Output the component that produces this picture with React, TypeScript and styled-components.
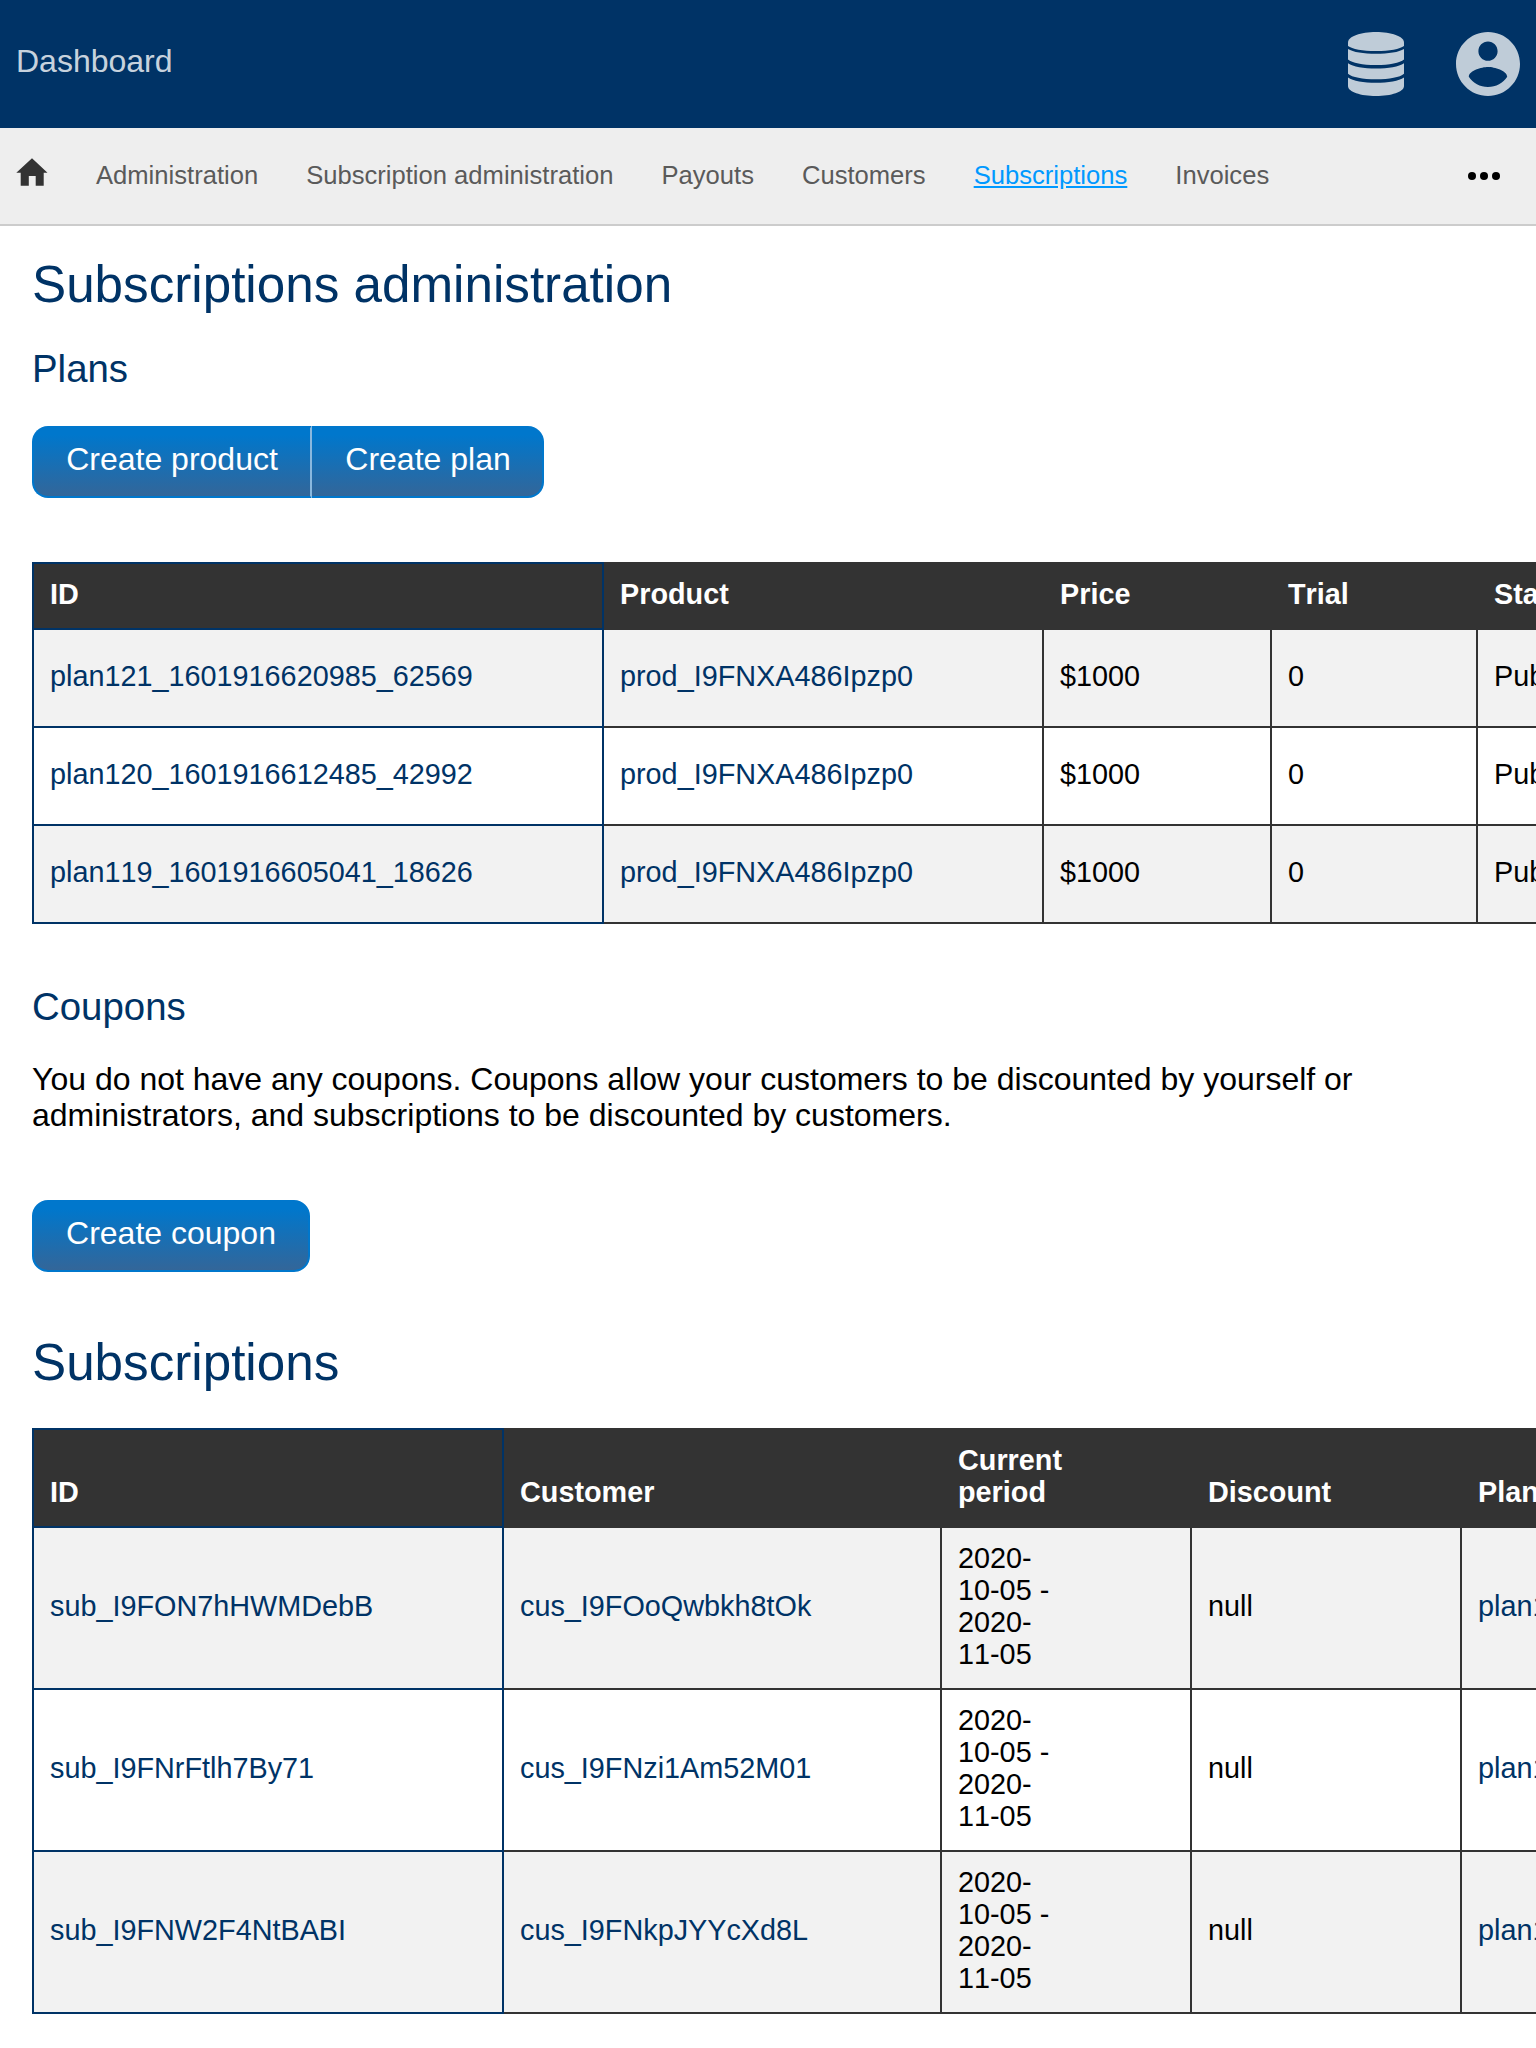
import React from "react";
import styled, { createGlobalStyle } from "styled-components";

const NAVY = "#003366";

const GlobalStyle = createGlobalStyle`
  html, body { margin: 0; padding: 0; background: #fff; }
  body {
    font: 32px/36px "Liberation Sans", Arial, sans-serif;
    color: #000;
    overflow: hidden;
  }
  *, *::before, *::after { box-sizing: border-box; }
`;

const Page = styled.div`
  height: 2048px;
  overflow: hidden;
`;

const Header = styled.header`
  display: flex;
  align-items: center;
  justify-content: space-between;
  height: 128px;
  padding: 0 16px;
  background: ${NAVY};
`;

const Brand = styled.a`
  padding-bottom: 7px;
  color: rgba(255, 255, 255, 0.8);
  text-decoration: none;
`;

const HeaderIcons = styled.div`
  display: flex;
  gap: 52px;
  color: #fff;
  opacity: 0.75;

  svg { display: block; height: 64px; fill: currentColor; }
`;

const NavBar = styled.nav`
  display: flex;
  align-items: center;
  height: 98px;
  padding: 0 36px 2px 16px;
  background: #eee;
  border-bottom: 2px solid #ccc;
  font-size: 25.6px;
  line-height: 30px;
`;

const HomeLink = styled.a`
  display: flex;
  width: 32px;
  margin: 0 48px 6px 0;
  color: #333;
`;

const NavLinks = styled.div`
  display: flex;
  flex: 1;
  gap: 48px;
`;

const NavLink = styled.a<{ $active?: boolean }>`
  color: ${(p) => (p.$active ? "#0099ff" : "#5a5a5a")};
  text-decoration: ${(p) => (p.$active ? "underline" : "none")};
`;

const More = styled.div`
  display: flex;
  gap: 4px;
  margin-top: 2px;
`;

const Dot = styled.span`
  width: 8px;
  height: 8px;
  border-radius: 50%;
  background: #000;
`;

const Content = styled.main`
  padding: 29px 32px 0;
`;

const Title = styled.h1`
  margin: 0;
  color: ${NAVY};
  font-size: 51.2px;
  font-weight: 400;
  line-height: 60px;
`;

const Subtitle = styled.h2`
  margin: 0;
  color: ${NAVY};
  font-size: 38.4px;
  font-weight: 400;
  line-height: 44px;
`;

const PlansHeading = styled(Subtitle)`
  margin: 32px 0 35px;
`;

const CouponsHeading = styled(Subtitle)`
  margin: 61px 0 32px;
`;

const Paragraph = styled.p`
  margin: 0 0 67px;
`;

const ButtonGroup = styled.div<{ $gap: number }>`
  display: flex;
  margin-bottom: ${(p) => p.$gap}px;
`;

const Button = styled.a<{ $width: number }>`
  width: ${(p) => p.$width}px;
  height: 72px;
  padding: 13px 0 0;
  border: 2px solid #0077cc;
  background: linear-gradient(#0077cc 10%, #336699) padding-box, #0077cc;
  color: #fff;
  line-height: 36px;
  text-align: center;

  &:first-child { border-radius: 16px 0 0 16px; }
  &:last-child { border-radius: 0 16px 16px 0; border-left-width: 0; padding-left: 2px; }
  &:only-child { border-radius: 16px; border-left-width: 2px; padding-left: 0; }
  &:first-child:not(:last-child) { border-right-color: #8ab8de; }
`;

const Table = styled.table<{ $width: number }>`
  width: ${(p) => p.$width}px;
  table-layout: fixed;
  border-collapse: collapse;
  font-size: 28.8px;
  line-height: 32px;
  font-kerning: none;
`;

const Row = styled.tr<{ $height: number }>`
  height: ${(p) => p.$height}px;
  &:nth-child(odd) { background: #f2f2f2; }
`;

const cell = `
  padding: 14px 16px 18px;
  border: 2px solid #333;
  text-align: left;
  &:first-child { border-color: ${NAVY}; }
`;

const HeadCell = styled.th`
  ${cell}
  background: #333;
  color: #fff;
  font-weight: 700;
  vertical-align: bottom;
`;

const Cell = styled.td`
  ${cell}
  vertical-align: middle;
`;

const CellLink = styled.a`
  color: ${NAVY};
  white-space: nowrap;
`;

const Period = styled.div`
  width: 100px;
`;

const SubscriptionsHeading = styled(Title)`
  margin: 0 0 35px;
`;

const DatabaseIcon = () => (
  <svg viewBox="0 0 56 64" width="56">
    <path d="M0 10.7C0 4.2 12.8 0 28 0s28 4.2 28 10.7V14c-4 3.1-14.500 5-28 5S4 17.100 0 14z" />
    <path d="M0 17c5 3.200 15.500 4.800 28 4.800S51 20.200 56 17v10.500c-4 3.500-14.500 5.500-28 5.500S4 31 0 27.500z" />
    <path d="M0 31.200c5 3.500 15.500 5.300 28 5.300s23-1.800 28-5.300v10.500c-4 3.600-14.500 5.500-28 5.500S4 45.300 0 41.700z" />
    <path d="M0 45.500c5 3.500 15.500 5.300 28 5.300s23-1.800 28-5.300v8.500c0 6-12.800 10-28 10S0 60 0 54z" />
  </svg>
);

const AccountIcon = () => (
  <svg viewBox="2 2 20 20" width="64">
    <path d="M12 2C6.48 2 2 6.48 2 12s4.480 10 10 10 10-4.480 10-10S17.520 2 12 2zm0 3c1.660 0 3 1.340 3 3s-1.340 3-3 3-3-1.340-3-3 1.340-3 3-3zm0 14.200c-2.500 0-4.710-1.280-6-3.220.03-1.990 4-3.080 6-3.080 1.990 0 5.970 1.090 6 3.080-1.290 1.940-3.500 3.220-6 3.220z" />
  </svg>
);

const HomeIcon = () => (
  <svg viewBox="0 0 32 28" width="32" height="28" fill="currentColor">
    <path d="M16 .3 31.500 14.800H27.700V27.700H19.700V18H12.800V27.700H4.700V14.800H.3z" />
  </svg>
);

const navItems = [
  "Administration",
  "Subscription administration",
  "Payouts",
  "Customers",
  "Subscriptions",
  "Invoices",
];

const plans = [
  "plan121_1601916620985_62569",
  "plan120_1601916612485_42992",
  "plan119_1601916605041_18626",
];

const subscriptions = [
  { id: "sub_I9FON7hHWMDebB", customer: "cus_I9FOoQwbkh8tOk" },
  { id: "sub_I9FNrFtlh7By71", customer: "cus_I9FNzi1Am52M01" },
  { id: "sub_I9FNW2F4NtBABI", customer: "cus_I9FNkpJYYcXd8L" },
];

const planColumns = [570, 440, 228, 206, 240];
const subscriptionColumns = [470, 438, 250, 270, 560];

const sum = (values: number[]) => values.reduce((a, b) => a + b, 0);

const Columns = ({ widths }: { widths: number[] }) => (
  <colgroup>
    {widths.map((w, i) => (
      <col key={i} width={w} />
    ))}
  </colgroup>
);

const Head = ({ labels, height }: { labels: React.ReactNode[]; height: number }) => (
  <thead>
    <Row $height={height}>
      {labels.map((label, i) => (
        <HeadCell key={i}>{label}</HeadCell>
      ))}
    </Row>
  </thead>
);

export default function App() {
  return (
    <Page>
      <GlobalStyle />
      <Header>
        <Brand>Dashboard</Brand>
        <HeaderIcons>
          <DatabaseIcon />
          <AccountIcon />
        </HeaderIcons>
      </Header>
      <NavBar>
        <HomeLink>
          <HomeIcon />
        </HomeLink>
        <NavLinks>
          {navItems.map((item) => (
            <NavLink key={item} $active={item === "Subscriptions"}>
              {item}
            </NavLink>
          ))}
        </NavLinks>
        <More>
          <Dot />
          <Dot />
          <Dot />
        </More>
      </NavBar>
      <Content>
        <Title>Subscriptions administration</Title>
        <PlansHeading>Plans</PlansHeading>
        <ButtonGroup $gap={64}>
          <Button $width={280}>Create product</Button>
          <Button $width={232}>Create plan</Button>
        </ButtonGroup>
        <Table $width={sum(planColumns)}>
          <Columns widths={planColumns} />
          <Head labels={["ID", "Product", "Price", "Trial", "Status"]} height={66} />
          <tbody>
            {plans.map((id) => (
              <Row key={id} $height={98}>
                <Cell><CellLink>{id}</CellLink></Cell>
                <Cell><CellLink>prod_I9FNXA486Ipzp0</CellLink></Cell>
                <Cell>$1000</Cell>
                <Cell>0</Cell>
                <Cell>Published</Cell>
              </Row>
            ))}
          </tbody>
        </Table>
        <CouponsHeading>Coupons</CouponsHeading>
        <Paragraph>
          You do not have any coupons. Coupons allow your customers to be discounted by yourself or
          administrators, and subscriptions to be discounted by customers.
        </Paragraph>
        <ButtonGroup $gap={61}>
          <Button $width={278}>Create coupon</Button>
        </ButtonGroup>
        <SubscriptionsHeading>Subscriptions</SubscriptionsHeading>
        <Table $width={sum(subscriptionColumns)}>
          <Columns widths={subscriptionColumns} />
          <Head
            labels={["ID", "Customer", <Period key="period">Current period</Period>, "Discount", "Plan"]}
            height={98}
          />
          <tbody>
            {subscriptions.map((s, i) => (
              <Row key={s.id} $height={162}>
                <Cell><CellLink>{s.id}</CellLink></Cell>
                <Cell><CellLink>{s.customer}</CellLink></Cell>
                <Cell><Period>2020-10-05 - 2020-11-05</Period></Cell>
                <Cell>null</Cell>
                <Cell><CellLink>{plans[i]}</CellLink></Cell>
              </Row>
            ))}
          </tbody>
        </Table>
      </Content>
    </Page>
  );
}
